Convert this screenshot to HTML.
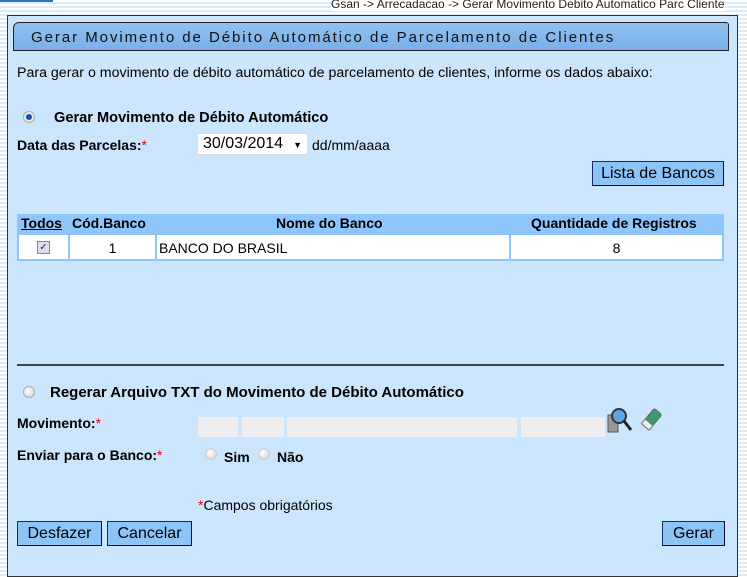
<!DOCTYPE html>
<html><head><meta charset="utf-8"><style>
body{margin:0;width:747px;height:556px;overflow:hidden;position:relative;font-family:"Liberation Sans",sans-serif;font-size:14px;color:#000;
background:repeating-linear-gradient(180deg,#fff 0 2px,#dcebf8 2px 4px);}
.a{position:absolute;white-space:nowrap}
.panel{position:absolute;left:7px;top:15px;width:729px;height:560px;background:#cbe5fd;border:1px solid #333}
.b{font-weight:bold}
.req{color:#e00}
.btn{position:absolute;background:#8cc4f8;border:1px solid #1a2a5a;border-right-color:#0a0a3a;border-bottom-color:#0a0a3a;font-size:16px;text-align:center;height:25px;box-sizing:border-box;line-height:23px}
.radio{position:absolute;width:10px;height:10px;border-radius:50%;background:radial-gradient(circle at 40% 40%,#fff,#ccc);border:1px solid #aaa}
.fld{position:absolute;top:417px;height:20px;background:#eeeeee}
</style></head><body>
<div class="a" style="left:0;top:0;width:53px;height:2px;background:#3a6fb0"></div>
<div class="a" style="left:331px;top:-3px;font-size:12px;color:#222;background:#fff;line-height:14px">Gsan -&gt; Arrecadacao -&gt; Gerar Movimento Debito Automatico Parc Cliente</div>
<div class="panel"></div>
<div class="a" style="left:13px;top:22px;width:714px;height:27px;background:linear-gradient(#8fc0f0,#7ab0e8);border:1px solid #222;border-radius:5px 5px 0 0;clip-path:polygon(6px 0,calc(100% - 4px) 0,100% 5px,100% 100%,0 100%,0 6px)"></div>
<div class="a" style="left:13px;top:22px;width:716px;height:29px;box-sizing:border-box;border:1px solid #222;border-top-left-radius:6px;border-top-right-radius:3px"></div>
<div class="a" style="left:31px;top:29px;font-size:15px;letter-spacing:1.95px;color:#111">Gerar Movimento de Débito Automático de Parcelamento de Clientes</div>
<div class="a" style="left:17px;top:65px;font-size:14.2px">Para gerar o movimento de débito automático de parcelamento de clientes, informe os dados abaixo:</div>
<div class="radio" style="left:23px;top:111px;background:radial-gradient(circle,#1a4f9a 0 2.5px,#eee 3.5px)"></div>
<div class="a b" style="left:54px;top:110px;font-size:14.6px">Gerar Movimento de Débito Automático</div>
<div class="a b" style="left:17px;top:137px">Data das Parcelas:<span class="req" style="font-weight:normal">*</span></div>
<div class="a" style="left:197px;top:133px;width:111px;height:22px;background:#fff;border:1px solid #ddd;box-sizing:border-box;font-size:16px;line-height:20px;padding-left:5px">30/03/2014 <span style="font-size:9px;position:absolute;right:5px;top:1px">▼</span></div>
<div class="a" style="left:312px;top:137px">dd/mm/aaaa</div>
<div class="btn" style="left:592px;top:161px;width:132px">Lista de Bancos</div>
<div class="a" style="left:17px;top:214px;width:707px;height:47px;background:#8ec5fb"></div>
<div class="a b" style="left:21px;top:215px;text-decoration:underline">Todos</div>
<div class="a b" style="left:72px;top:215px">Cód.Banco</div>
<div class="a b" style="left:276px;top:215px">Nome do Banco</div>
<div class="a b" style="left:531px;top:215px">Quantidade de Registros</div>
<div class="a" style="left:19px;top:235px;width:49px;height:24px;background:#fff"></div>
<div class="a" style="left:37px;top:241px;width:11px;height:11px;border:1px solid #888;background:#dde;font-size:10px;line-height:11px;text-align:center;color:#225">✓</div>
<div class="a" style="left:70px;top:235px;width:85px;height:24px;background:#fff;text-align:center;line-height:26px">1</div>
<div class="a" style="left:157px;top:235px;width:352px;height:24px;background:#fff;line-height:26px;padding-left:2px;box-sizing:border-box">BANCO DO BRASIL</div>
<div class="a" style="left:511px;top:235px;width:211px;height:24px;background:#fff;text-align:center;line-height:26px">8</div>
<div class="a" style="left:17px;top:364px;width:707px;height:2px;background:#444"></div>
<div class="radio" style="left:23px;top:386px"></div>
<div class="a b" style="left:50px;top:384px;font-size:15px">Regerar Arquivo TXT do Movimento de Débito Automático</div>
<div class="a b" style="left:17px;top:415px">Movimento:<span class="req" style="font-weight:normal">*</span></div>
<div class="fld" style="left:198px;width:40px"></div>
<div class="fld" style="left:242px;width:42px"></div>
<div class="fld" style="left:287px;width:230px"></div>
<div class="fld" style="left:521px;width:84px"></div>
<svg class="a" style="left:606px;top:405px" width="60" height="30" viewBox="0 0 60 30">
<rect x="2" y="10" width="10" height="17" fill="#999" stroke="#555"/>
<circle cx="13" cy="11" r="7" fill="#5aa7e0" stroke="#333" stroke-width="2"/>
<line x1="18" y1="16" x2="25" y2="25" stroke="#222" stroke-width="3"/>
<g transform="rotate(-50 45 15)"><rect x="36" y="10" width="20" height="10" rx="2" fill="#3a9a6a" stroke="#666"/><rect x="36" y="10" width="6" height="10" fill="#eee" stroke="#777"/></g>
</svg>
<div class="a b" style="left:17px;top:447px">Enviar para o Banco:<span class="req" style="font-weight:normal">*</span></div>
<div class="radio" style="left:205px;top:448px;border-color:#ccc"></div>
<div class="a b" style="left:224px;top:449px">Sim</div>
<div class="radio" style="left:258px;top:448px;border-color:#ccc"></div>
<div class="a b" style="left:277px;top:449px">Não</div>
<div class="a" style="left:198px;top:497px"><span class="req">*</span>Campos obrigatórios</div>
<div class="btn" style="left:17px;top:521px;width:85px">Desfazer</div>
<div class="btn" style="left:107px;top:521px;width:85px">Cancelar</div>
<div class="btn" style="left:662px;top:521px;width:63px">Gerar</div>
</body></html>
